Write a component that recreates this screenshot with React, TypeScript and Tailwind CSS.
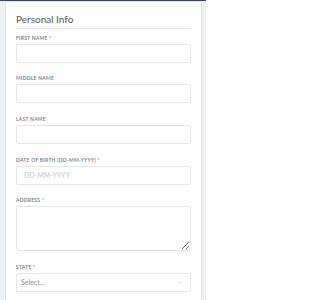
import { ChevronDown } from "lucide-react"

interface FieldProps {
  label: string
  children: React.ReactNode
}

function Field({ label, children }: FieldProps) {
  return (
    <div className="mb-[12.7px]">
      <label className="block text-[5px] leading-[6px] mb-[3px] font-semibold tracking-[0.25px] uppercase text-[#72777e]">
        {label}
      </label>
      {children}
    </div>
  )
}

const inputCls =
  "block w-full h-[19px] border border-[#e3e6ea] rounded-[2px] bg-white px-[7px] text-[7px] text-[#555] placeholder:text-[#c3c7cc] outline-none"

export default function App() {
  return (
    <div className="w-[206px] h-[300px] bg-[#eef1f4] border-t border-[#3b4757] font-[Lato,sans-serif] overflow-hidden">
      <div className="ml-[5px] mr-[4px] bg-white border border-[#e2e6eb] px-[10px] pt-[10px] pb-4">
        <h2 className="text-[10px] leading-[14px] text-[#54595e] pb-[2px] border-b border-[#e1e4e8]">
          Personal Info
        </h2>
        <div className="mt-[5.5px]">
          <Field label="First Name *">
            <input className={inputCls} />
          </Field>
          <Field label="Middle Name">
            <input className={inputCls} />
          </Field>
          <Field label="Last Name">
            <input className={inputCls} />
          </Field>
          <Field label="Date of Birth (DD-MM-YYYY) *">
            <input className={inputCls} placeholder="DD-MM-YYYY" />
          </Field>
          <Field label="Address *">
            <textarea className="block w-full h-[45px] border border-[#e3e6ea] rounded-[2px] bg-white outline-none" />
          </Field>
          <Field label="State *">
            <div className="flex items-center justify-between h-[19px] border border-[#e3e6ea] rounded-[2px] bg-white pl-[4px] pr-[6px]">
              <span className="text-[7px] text-[#8a8f95]">Select...</span>
              <ChevronDown className="w-[7px] h-[7px] text-[#b9bdc2]" strokeWidth={2} />
            </div>
          </Field>
        </div>
      </div>
    </div>
  )
}
